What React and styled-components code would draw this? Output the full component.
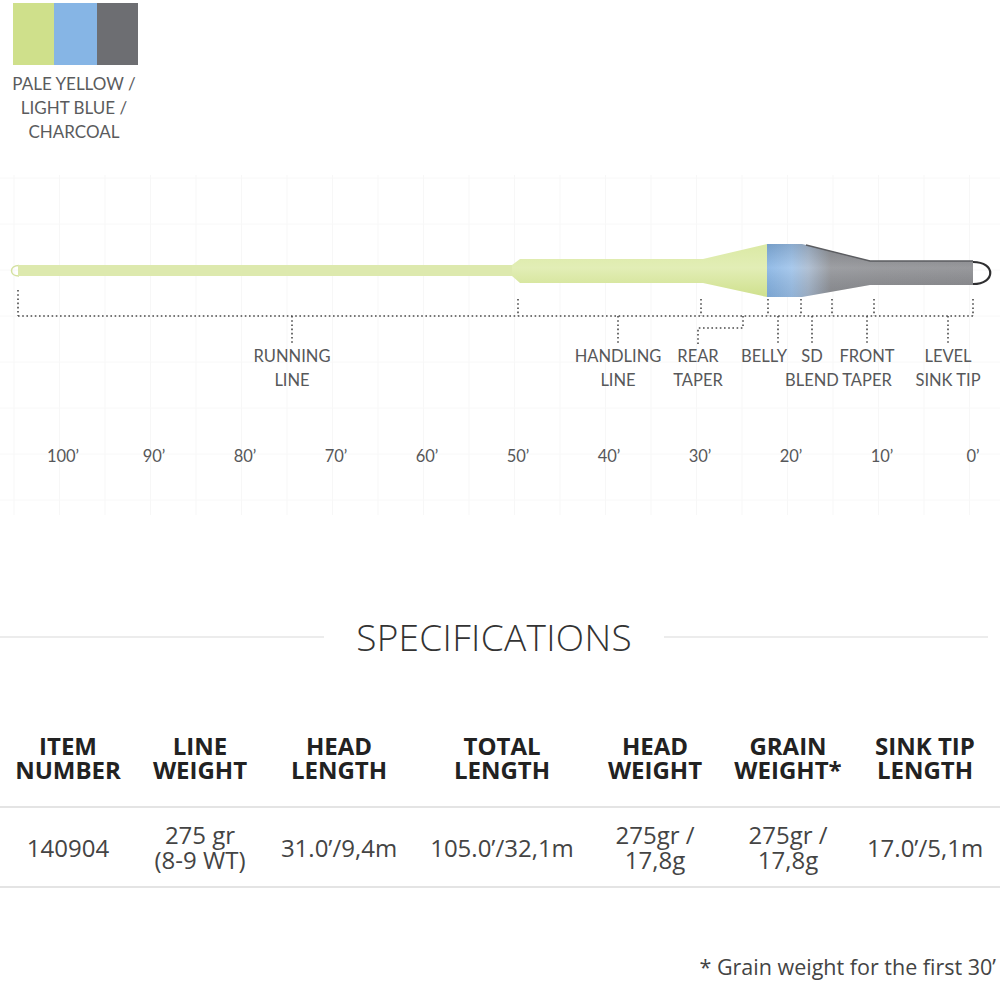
import styled, { createGlobalStyle } from 'styled-components'

const GlobalStyle = createGlobalStyle`
  html, body {
    margin: 0;
    padding: 0;
    background: #ffffff;
  }
  body {
    font-family: "Open Sans", "Liberation Sans", sans-serif;
  }
`;

const Page = styled.div`
  width: 1000px;
  display: flex;
  flex-direction: column;
  overflow: hidden;
`;

const ColorBlock = styled.div`
  height: 150px;
  box-sizing: border-box;
  padding: 3px 0 0 10px;
  display: flex;
  flex-direction: column;
  align-items: flex-start;
`;

const ColorGroup = styled.div`
  display: flex;
  flex-direction: column;
  align-items: center;
  width: 128px;
`;

const Swatches = styled.div`
  display: flex;
  margin-left: 2px;
`;

const Swatch = styled.div`
  width: ${({ w }) => w}px;
  height: 62px;
  background: ${({ color }) => color};
`;

const Caption = styled.div`
  margin-top: 7px;
  font-family: Lato, "Open Sans", sans-serif;
  font-size: 17px;
  line-height: 24px;
  color: #5a5b5d;
  text-align: center;
  white-space: nowrap;
`;

const Diagram = styled.svg`
  display: block;
  width: 1000px;
  height: 440px;
`;

const Label = styled.text`
  font-family: Lato, "Open Sans", sans-serif;
  font-size: 16.5px;
  fill: #57585a;
  text-anchor: middle;
`;

const SpecHeading = styled.div`
  margin-top: 22px;
  height: 50px;
  display: flex;
  align-items: center;
  gap: 32px;
  padding-right: 12px;
`;

const Rule = styled.div`
  flex: 1;
  height: 2px;
  background: #ececec;
`;

const HeadingText = styled.div`
  font-family: "Open Sans", sans-serif;
  font-weight: 300;
  font-size: 37px;
  line-height: 50px;
  color: #333;
  letter-spacing: 0.3px;
`;

const Row = styled.div`
  display: grid;
  grid-template-columns: 136px 128px 150px 176px 130px 136px 138px;
  align-items: center;
  border-bottom: 2px solid #e4e4e4;
  box-sizing: border-box;
`;

const HeadRow = styled(Row)`
  margin-top: 72px;
  padding-bottom: 24px;
`;

const DataRow = styled(Row)`
  height: 80px;
`;

const HeadCell = styled.div`
  font-family: "Open Sans", sans-serif;
  font-weight: 700;
  font-size: 24px;
  line-height: 24px;
  color: #222;
  text-align: center;
  white-space: nowrap;
`;

const DataCell = styled.div`
  font-family: "Open Sans", sans-serif;
  font-size: 24px;
  line-height: 25px;
  color: #444;
  text-align: center;
  white-space: nowrap;
`;

const Footnote = styled.div`
  margin-top: 64px;
  padding-right: 4px;
  font-family: "Open Sans", sans-serif;
  font-size: 21.5px;
  line-height: 30px;
  color: #444;
  text-align: right;
`;

const swatches = [
  { color: '#cfe08b', w: 41 },
  { color: '#86b5e5', w: 43 },
  { color: '#6d6e72', w: 41 },
]

const labels = [
  { x: 292, lines: ['RUNNING', 'LINE'] },
  { x: 618, lines: ['HANDLING', 'LINE'] },
  { x: 698, lines: ['REAR', 'TAPER'] },
  { x: 764, lines: ['BELLY'] },
  { x: 812, lines: ['SD', 'BLEND'] },
  { x: 867, lines: ['FRONT', 'TAPER'] },
  { x: 948, lines: ['LEVEL', 'SINK TIP'] },
]

const upTicks = [518, 701, 768, 801, 832, 874, 973]
const drops = [292, 618, 778, 812, 867, 948]
const distances = ['100’', '90’', '80’', '70’', '60’', '50’', '40’', '30’', '20’', '10’', '0’']

const columns = [
  { head: ['ITEM', 'NUMBER'], value: ['140904'] },
  { head: ['LINE', 'WEIGHT'], value: ['275 gr', '(8-9 WT)'] },
  { head: ['HEAD', 'LENGTH'], value: ['31.0’/9,4m'] },
  { head: ['TOTAL', 'LENGTH'], value: ['105.0’/32,1m'] },
  { head: ['HEAD', 'WEIGHT'], value: ['275gr /', '17,8g'] },
  { head: ['GRAIN', 'WEIGHT*'], value: ['275gr /', '17,8g'] },
  { head: ['SINK TIP', 'LENGTH'], value: ['17.0’/5,1m'] },
]

const dot = { stroke: '#4a4a4a', strokeWidth: 1.6, strokeDasharray: '1.6 2.6' }

// two stacked lines as one text node
const Stack = ({ lines }) => (
  <>
    {lines[0]}
    {lines[1] && <br />}
    {lines[1]}
  </>
)

const FlyLine = () => {
  const gridX = []
  for (let x = 14; x < 1000; x += 45.5) gridX.push(x)
  const gridY = [178, 224, 270, 316, 362, 408, 454, 500]

  return (
    <Diagram viewBox="0 150 1000 440">
      <defs>
        <linearGradient id="yellow" x1="0" y1="0" x2="0" y2="1">
          <stop offset="0" stopColor="#dbe9a4" />
          <stop offset="0.45" stopColor="#e2eeb6" />
          <stop offset="1" stopColor="#cfe08d" />
        </linearGradient>
        <linearGradient id="head" gradientUnits="userSpaceOnUse" x1="767" y1="0" x2="973" y2="0">
          <stop offset="0" stopColor="#85b3e4" />
          <stop offset="0.12" stopColor="#9dc2ea" />
          <stop offset="0.2" stopColor="#a7b9cf" />
          <stop offset="0.31" stopColor="#909297" />
          <stop offset="0.55" stopColor="#8d8e92" />
          <stop offset="1" stopColor="#8a8b8f" />
        </linearGradient>
        <linearGradient id="shade" x1="0" y1="0" x2="0" y2="1">
          <stop offset="0" stopColor="#000" stopOpacity="0.12" />
          <stop offset="0.45" stopColor="#fff" stopOpacity="0.12" />
          <stop offset="1" stopColor="#000" stopOpacity="0.08" />
        </linearGradient>
      </defs>

      {gridX.map((x) => (
        <line key={`gx${x}`} x1={x} y1="175" x2={x} y2="515" stroke="#f7f7f7" strokeWidth="1" />
      ))}
      {gridY.map((y) => (
        <line key={`gy${y}`} x1="0" y1={y} x2="1000" y2={y} stroke="#f8f8f8" strokeWidth="1" />
      ))}

      {/* running line with its loop */}
      <path d="M19 265.5 C 9 265.5 9 276 19 276" fill="none" stroke="#d3e09f" strokeWidth="1.5" />
      <rect x="18" y="265" width="500" height="11" fill="#dde9ae" />

      {/* handling line, rear taper */}
      <path d="M512 265 L520 259 L703 259 L767 244 L767 297 L703 283 L520 283 L512 276 Z" fill="url(#yellow)" />

      {/* belly, front taper, tip */}
      <path d="M767 244 L802 244 L870 261 L973 261 L973 285 L870 285 L802 297 L767 297 Z" fill="url(#head)" />
      <path d="M767 244 L802 244 L870 261 L973 261 L973 285 L870 285 L802 297 L767 297 Z" fill="url(#shade)" />
      <path d="M806 245 L870 261 L973 261" fill="none" stroke="#5b5c60" strokeWidth="1.4" />
      <path d="M973 262 C 996 262 996 284 973 284" fill="none" stroke="#2f2f31" strokeWidth="2.2" />

      {/* measure lines */}
      <line x1="18" y1="316" x2="973" y2="316" {...dot} />
      <line x1="18" y1="290" x2="18" y2="316" {...dot} />
      {upTicks.map((x) => (
        <line key={`u${x}`} x1={x} y1="299" x2={x} y2="316" {...dot} />
      ))}
      {drops.map((x) => (
        <line key={`d${x}`} x1={x} y1="316" x2={x} y2="345" {...dot} />
      ))}
      <polyline points="743,316 743,328 698,328 698,345" fill="none" {...dot} />

      {labels.map(({ x, lines }) =>
        lines.map((t, i) => (
          <Label key={`${x}${t}`} x={x} y={362 + i * 24}>{t}</Label>
        ))
      )}

      {distances.map((d, i) => (
        <Label key={d} x={63 + i * 91} y={462}>{d}</Label>
      ))}
    </Diagram>
  )
}

const App = () => {
  return (
    <Page>
      <GlobalStyle />
      <ColorBlock>
        <ColorGroup>
          <Swatches>
            {swatches.map((s) => (
              <Swatch key={s.color} color={s.color} w={s.w} />
            ))}
          </Swatches>
          <Caption>
            PALE YELLOW /<br />
            LIGHT BLUE /<br />
            CHARCOAL
          </Caption>
        </ColorGroup>
      </ColorBlock>

      <FlyLine />

      <SpecHeading>
        <Rule />
        <HeadingText>SPECIFICATIONS</HeadingText>
        <Rule />
      </SpecHeading>

      <HeadRow>
        {columns.map((c, i) => (
          <HeadCell key={i}>
            <Stack lines={c.head} />
          </HeadCell>
        ))}
      </HeadRow>
      <DataRow>
        {columns.map((c, i) => (
          <DataCell key={i}>
            <Stack lines={c.value} />
          </DataCell>
        ))}
      </DataRow>

      <Footnote>* Grain weight for the first 30’</Footnote>
    </Page>
  )
}

export default App
